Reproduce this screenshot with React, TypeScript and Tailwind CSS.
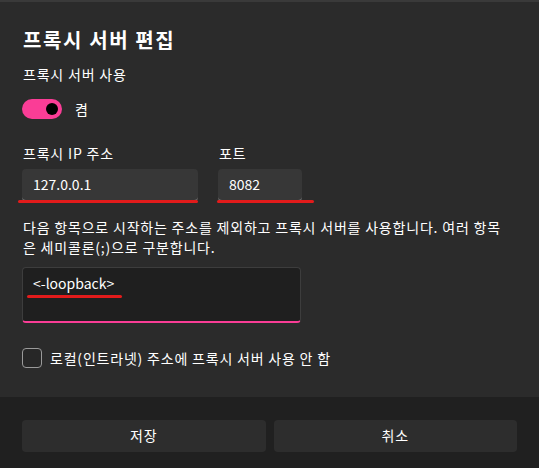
export default function App() {
  return (
    <div
      className="w-[539px] h-[468px] flex flex-col bg-[#2b2b2b] text-white overflow-hidden tracking-[0.05em]"
      style={{ fontFamily: '"Noto Sans CJK KR", "Noto Sans", sans-serif' }}
    >
      <div className="h-[2px] bg-[#3a3a3a]" />
      <div className="flex-1 flex flex-col px-[23px]">
        <h1 className="mt-[24px] text-[20px] leading-[28px] font-semibold tracking-[0.08em]">프록시 서버 편집</h1>
        <p className="mt-[10px] text-[14px] leading-[20px]">프록시 서버 사용</p>
        <div className="mt-[15px] flex items-center gap-[13px] -ml-px">
          <div className="w-[40px] h-[20px] rounded-full bg-[#fa3d96] flex items-center justify-end pr-[4px]">
            <div className="w-[12px] h-[12px] rounded-full bg-black" />
          </div>
          <span className="text-[14px] leading-[20px]">켬</span>
        </div>

        <div className="mt-[24px] flex gap-[21px]">
          <div className="w-[175px] flex flex-col">
            <p className="text-[14px] leading-[20px]">프록시 IP 주소</p>
            <div className="mt-[6px] -ml-px h-[32px] rounded-[4px] bg-[#373737] border-b border-[#8a8a8a] flex items-center px-[11px] text-[14px] tracking-normal">
              127.0.0.1
            </div>
            <div className="-mt-px -ml-[5px] h-[3px] rounded-full bg-[#e21b1b]" />
          </div>
          <div className="w-[83px] flex flex-col">
            <p className="text-[14px] leading-[20px]">포트</p>
            <div className="mt-[6px] -ml-px h-[32px] rounded-[4px] bg-[#373737] border-b border-[#8a8a8a] flex items-center px-[11px] text-[14px] tracking-normal">
              8082
            </div>
            <div className="-mt-px -ml-[2px] -mr-[12px] h-[3px] rounded-full bg-[#e21b1b]" />
          </div>
        </div>

        <p className="mt-[14px] text-[14px] leading-[20px] whitespace-nowrap">
          다음 항목으로 시작하는 주소를 제외하고 프록시 서버를 사용합니다. 여러 항목
          <br />
          은 세미콜론(;)으로 구분합니다.
        </p>
        <div className="mt-[10px] -ml-px w-[279px] h-[56px] rounded-[4px] bg-[#1f1f1f] border border-[#3d3d3d] border-b-2 border-b-[#fa3d96] px-[4px] pt-[5px] text-[14px] leading-[20px] tracking-normal">
          <div className="px-[6px]">&lt;-loopback&gt;</div>
          <div className="mt-[2px] w-[95px] h-[3px] rounded-full bg-[#e21b1b]" />
        </div>

        <div className="mt-[25px] flex items-center gap-[8px] -ml-px">
          <div className="w-[20px] h-[20px] rounded-[4px] border border-[#9a9a9a] bg-[#272727]" />
          <span className="text-[14px] leading-[20px]">로컬(인트라넷) 주소에 프록시 서버 사용 안 함</span>
        </div>
      </div>
      <div className="h-[71px] bg-[#202020] flex items-center gap-[8px] px-[22px] pt-[6px]">
        <button className="flex-1 h-[32px] rounded-[4px] bg-[#2d2d2d] text-[14px]">저장</button>
        <button className="flex-1 h-[32px] rounded-[4px] bg-[#2d2d2d] text-[14px]">취소</button>
      </div>
    </div>
  );
}
